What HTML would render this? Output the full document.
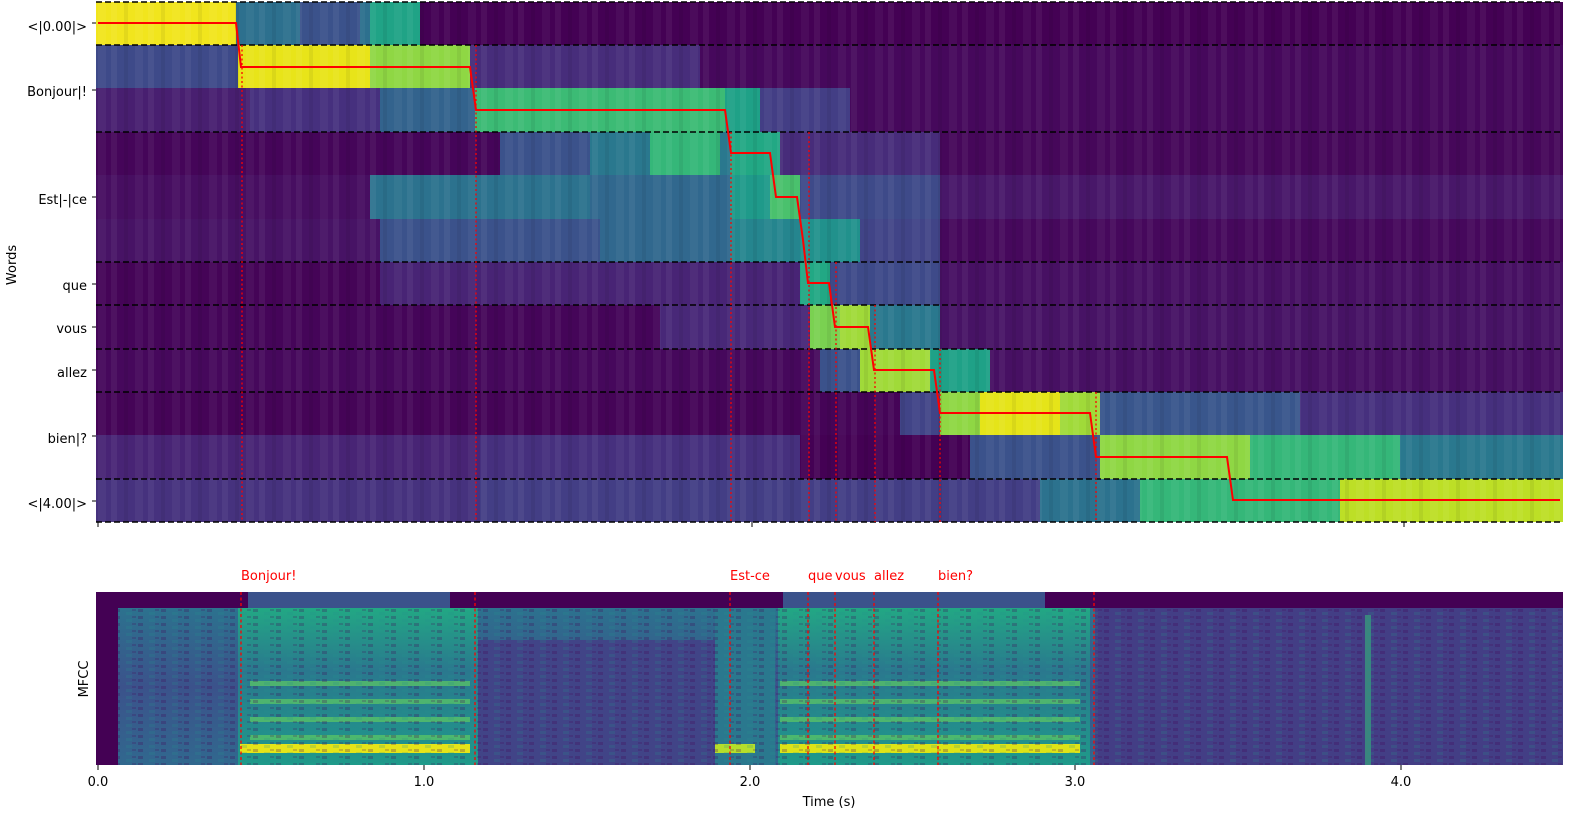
<!DOCTYPE html>
<html><head><meta charset="utf-8"><style>
html,body{margin:0;padding:0;background:#fff;width:1590px;height:824px;overflow:hidden}
svg{display:block}
text{font-family:"DejaVu Sans","Liberation Sans",sans-serif;font-size:13px;fill:#000}
</style></head><body>
<svg width="1590" height="824" viewBox="0 0 1590 824" xmlns="http://www.w3.org/2000/svg">
<defs>
<pattern id="stripes" width="37" height="10" patternUnits="userSpaceOnUse">
<rect x="0" y="0" width="6" height="10" fill="#fff" opacity="0.05"/>
<rect x="13" y="0" width="4" height="10" fill="#000" opacity="0.06"/>
<rect x="24" y="0" width="8" height="10" fill="#fff" opacity="0.04"/>
</pattern>
<pattern id="noise" width="23" height="7" patternUnits="userSpaceOnUse">
<rect x="0" y="0" width="5" height="3" fill="#440154" opacity="0.25"/>
<rect x="11" y="3" width="6" height="3" fill="#21918c" opacity="0.2"/>
<rect x="17" y="0" width="4" height="2" fill="#440154" opacity="0.2"/>
</pattern>
<linearGradient id="spq" x1="0" y1="0" x2="0" y2="1">
<stop offset="0" stop-color="#2c728e"/><stop offset="0.5" stop-color="#3b528b"/><stop offset="1" stop-color="#31688e"/>
</linearGradient>
<linearGradient id="speech" x1="0" y1="0" x2="0" y2="1">
<stop offset="0" stop-color="#22a884"/><stop offset="0.4" stop-color="#2a788e"/><stop offset="1" stop-color="#1f9a8a"/>
</linearGradient>
<pattern id="harm" width="10" height="18" patternUnits="userSpaceOnUse" y="4">
<rect y="11" width="10" height="5" fill="#5ec962" opacity="0.7"/>
</pattern>
</defs>

<g>
<rect x="96" y="2" width="140" height="43" fill="#f1e51d"/>
<rect x="236" y="2" width="134" height="43" fill="#2d708e"/>
<rect x="300" y="2" width="60" height="43" fill="#3b528b"/>
<rect x="370" y="2" width="50" height="43" fill="#20a386"/>
<rect x="420" y="2" width="1143" height="43" fill="#440154"/>
<rect x="96" y="45" width="142" height="43" fill="#3e4a89"/>
<rect x="238" y="45" width="132" height="43" fill="#e8e419"/>
<rect x="370" y="45" width="100" height="43" fill="#8fd744"/>
<rect x="470" y="45" width="230" height="43" fill="#472d7b"/>
<rect x="700" y="45" width="863" height="43" fill="#46085c"/>
<rect x="96" y="88" width="154" height="44" fill="#481f70"/>
<rect x="250" y="88" width="130" height="44" fill="#46307e"/>
<rect x="380" y="88" width="95" height="44" fill="#33638d"/>
<rect x="475" y="88" width="250" height="44" fill="#3cbb75"/>
<rect x="725" y="88" width="35" height="44" fill="#1fa187"/>
<rect x="760" y="88" width="90" height="44" fill="#433e85"/>
<rect x="850" y="88" width="713" height="44" fill="#46085c"/>
<rect x="96" y="132" width="404" height="43" fill="#450559"/>
<rect x="500" y="132" width="90" height="43" fill="#3b528b"/>
<rect x="590" y="132" width="140" height="43" fill="#2a788e"/>
<rect x="650" y="132" width="70" height="43" fill="#35b779"/>
<rect x="730" y="132" width="50" height="43" fill="#22a884"/>
<rect x="780" y="132" width="160" height="43" fill="#472c7a"/>
<rect x="940" y="132" width="623" height="43" fill="#46075a"/>
<rect x="96" y="175" width="274" height="44" fill="#470e61"/>
<rect x="370" y="175" width="220" height="44" fill="#2c728e"/>
<rect x="590" y="175" width="140" height="44" fill="#31688e"/>
<rect x="730" y="175" width="40" height="44" fill="#1f9a8a"/>
<rect x="770" y="175" width="30" height="44" fill="#4ac16d"/>
<rect x="800" y="175" width="140" height="44" fill="#3e4a89"/>
<rect x="940" y="175" width="623" height="44" fill="#481769"/>
<rect x="96" y="219" width="284" height="43" fill="#471365"/>
<rect x="380" y="219" width="220" height="43" fill="#3b528b"/>
<rect x="600" y="219" width="130" height="43" fill="#31688e"/>
<rect x="730" y="219" width="70" height="43" fill="#25858e"/>
<rect x="800" y="219" width="60" height="43" fill="#21918c"/>
<rect x="860" y="219" width="80" height="43" fill="#414487"/>
<rect x="940" y="219" width="623" height="43" fill="#46085c"/>
<rect x="96" y="262" width="284" height="43" fill="#450457"/>
<rect x="380" y="262" width="420" height="43" fill="#482475"/>
<rect x="800" y="262" width="30" height="43" fill="#22a884"/>
<rect x="830" y="262" width="110" height="43" fill="#3e4a89"/>
<rect x="940" y="262" width="623" height="43" fill="#471063"/>
<rect x="96" y="305" width="564" height="44" fill="#450559"/>
<rect x="660" y="305" width="150" height="44" fill="#482878"/>
<rect x="810" y="305" width="30" height="44" fill="#7ad151"/>
<rect x="840" y="305" width="30" height="44" fill="#a0da39"/>
<rect x="870" y="305" width="70" height="44" fill="#2a788e"/>
<rect x="940" y="305" width="623" height="44" fill="#471365"/>
<rect x="96" y="349" width="724" height="43" fill="#46085c"/>
<rect x="820" y="349" width="40" height="43" fill="#3b528b"/>
<rect x="860" y="349" width="70" height="43" fill="#a0da39"/>
<rect x="930" y="349" width="60" height="43" fill="#1fa187"/>
<rect x="990" y="349" width="573" height="43" fill="#471063"/>
<rect x="96" y="392" width="804" height="43" fill="#450457"/>
<rect x="900" y="392" width="40" height="43" fill="#414487"/>
<rect x="940" y="392" width="40" height="43" fill="#8fd744"/>
<rect x="980" y="392" width="80" height="43" fill="#e5e419"/>
<rect x="1060" y="392" width="40" height="43" fill="#a0da39"/>
<rect x="1100" y="392" width="200" height="43" fill="#39568c"/>
<rect x="1300" y="392" width="263" height="43" fill="#46307e"/>
<rect x="96" y="435" width="384" height="44" fill="#482475"/>
<rect x="480" y="435" width="320" height="44" fill="#46307e"/>
<rect x="800" y="435" width="170" height="44" fill="#440154"/>
<rect x="970" y="435" width="130" height="44" fill="#3b528b"/>
<rect x="1100" y="435" width="150" height="44" fill="#8fd744"/>
<rect x="1250" y="435" width="150" height="44" fill="#35b779"/>
<rect x="1400" y="435" width="163" height="44" fill="#2a788e"/>
<rect x="96" y="479" width="384" height="43" fill="#46327e"/>
<rect x="480" y="479" width="560" height="43" fill="#433e85"/>
<rect x="1040" y="479" width="100" height="43" fill="#2c728e"/>
<rect x="1140" y="479" width="200" height="43" fill="#35b779"/>
<rect x="1340" y="479" width="223" height="43" fill="#bddf26"/>
<rect x="96" y="2" width="1467" height="520" fill="url(#stripes)"/>
</g>

<g stroke="#000" stroke-width="1.5" stroke-dasharray="6,3">
<line x1="96" y1="2" x2="1563" y2="2"/>
<line x1="96" y1="45" x2="1563" y2="45"/>
<line x1="96" y1="132" x2="1563" y2="132"/>
<line x1="96" y1="262" x2="1563" y2="262"/>
<line x1="96" y1="305" x2="1563" y2="305"/>
<line x1="96" y1="349" x2="1563" y2="349"/>
<line x1="96" y1="392" x2="1563" y2="392"/>
<line x1="96" y1="479" x2="1563" y2="479"/>
<line x1="96" y1="522" x2="1563" y2="522"/>
</g>

<g stroke="#ff0000" stroke-width="1.3" stroke-dasharray="2,2.5">
<line x1="242" y1="45" x2="242" y2="522"/>
<line x1="476" y1="45" x2="476" y2="522"/>
<line x1="731" y1="132" x2="731" y2="522"/>
<line x1="809" y1="132" x2="809" y2="522"/>
<line x1="836" y1="262" x2="836" y2="522"/>
<line x1="875" y1="305" x2="875" y2="522"/>
<line x1="940" y1="349" x2="940" y2="522"/>
<line x1="1096" y1="392" x2="1096" y2="522"/>
</g>

<polyline fill="none" stroke="#ff0000" stroke-width="2" points="98,23 236,23 241,67 470,67 476,110 725,110 731,153 770,153 776,197 797,197 803,240 808,283 829,283 835,327 868,327 874,370 934,370 940,413 1090,413 1096,457 1227,457 1233,500 1560,500"/>

<g stroke="#000" stroke-width="1">
<line x1="92" y1="23" x2="96" y2="23"/>
<line x1="92" y1="90" x2="96" y2="90"/>
<line x1="92" y1="197" x2="96" y2="197"/>
<line x1="92" y1="284" x2="96" y2="284"/>
<line x1="92" y1="327" x2="96" y2="327"/>
<line x1="92" y1="370" x2="96" y2="370"/>
<line x1="92" y1="436" x2="96" y2="436"/>
<line x1="92" y1="501" x2="96" y2="501"/>
<line x1="98" y1="522" x2="98" y2="527"/>
<line x1="752" y1="522" x2="752" y2="527"/>
<line x1="1404" y1="522" x2="1404" y2="527"/>
</g>
<g text-anchor="end">
<text x="87" y="31">&lt;|0.00|&gt;</text>
<text x="87" y="96">Bonjour|!</text>
<text x="87" y="204">Est|-|ce</text>
<text x="87" y="290">que</text>
<text x="87" y="333">vous</text>
<text x="87" y="377">allez</text>
<text x="87" y="443">bien|?</text>
<text x="87" y="508">&lt;|4.00|&gt;</text>
</g>
<text transform="translate(16,265) rotate(-90)" text-anchor="middle">Words</text>

<text x="241" y="580" style="fill:#ff0000">Bonjour!</text>
<text x="730" y="580" style="fill:#ff0000">Est-ce</text>
<text x="808" y="580" style="fill:#ff0000">que</text>
<text x="835" y="580" style="fill:#ff0000">vous</text>
<text x="874" y="580" style="fill:#ff0000">allez</text>
<text x="938" y="580" style="fill:#ff0000">bien?</text>

<g>
<rect x="96" y="592" width="1467" height="173" fill="#3e4a89"/>
<rect x="96" y="608" width="1467" height="157" fill="url(#spq)"/>
<rect x="96" y="592" width="1467" height="16" fill="#440154"/>
<rect x="248" y="592" width="202" height="16" fill="#3b528b"/>
<rect x="783" y="592" width="262" height="16" fill="#3b528b"/>
<rect x="96" y="592" width="22" height="173" fill="#440154"/>
<rect x="450" y="640" width="265" height="125" fill="#414487"/>
<rect x="1095" y="608" width="468" height="157" fill="#433e85"/>
<rect x="238" y="608" width="240" height="157" fill="url(#speech)"/>
<rect x="715" y="608" width="60" height="157" fill="#2a788e"/>
<rect x="778" y="608" width="312" height="157" fill="url(#speech)"/>
<rect x="250" y="680" width="220" height="70" fill="url(#harm)"/>
<rect x="780" y="680" width="300" height="70" fill="url(#harm)"/>
<rect x="240" y="744" width="230" height="9" fill="#e5e419"/>
<rect x="780" y="744" width="300" height="9" fill="#dde318"/>
<rect x="715" y="744" width="40" height="9" fill="#b5de2b"/>
<rect x="1365" y="615" width="6" height="150" fill="#35b779" opacity="0.6"/>
<rect x="118" y="608" width="1445" height="157" fill="url(#noise)"/>
</g>

<g stroke="#ff0000" stroke-width="1.3" stroke-dasharray="3,2.5">
<line x1="241" y1="592" x2="241" y2="765"/>
<line x1="475" y1="592" x2="475" y2="765"/>
<line x1="730" y1="592" x2="730" y2="765"/>
<line x1="808" y1="592" x2="808" y2="765"/>
<line x1="835" y1="592" x2="835" y2="765"/>
<line x1="874" y1="592" x2="874" y2="765"/>
<line x1="938" y1="592" x2="938" y2="765"/>
<line x1="1094" y1="592" x2="1094" y2="765"/>
</g>

<text transform="translate(88,679) rotate(-90)" text-anchor="middle">MFCC</text>

<g stroke="#000" stroke-width="1">
<line x1="98" y1="765" x2="98" y2="770"/>
<line x1="424" y1="765" x2="424" y2="770"/>
<line x1="750" y1="765" x2="750" y2="770"/>
<line x1="1075" y1="765" x2="1075" y2="770"/>
<line x1="1401" y1="765" x2="1401" y2="770"/>
</g>
<g text-anchor="middle">
<text x="98" y="786">0.0</text>
<text x="424" y="786">1.0</text>
<text x="750" y="786">2.0</text>
<text x="1075" y="786">3.0</text>
<text x="1401" y="786">4.0</text>
<text x="829" y="806">Time (s)</text>
</g>
</svg>
</body></html>
